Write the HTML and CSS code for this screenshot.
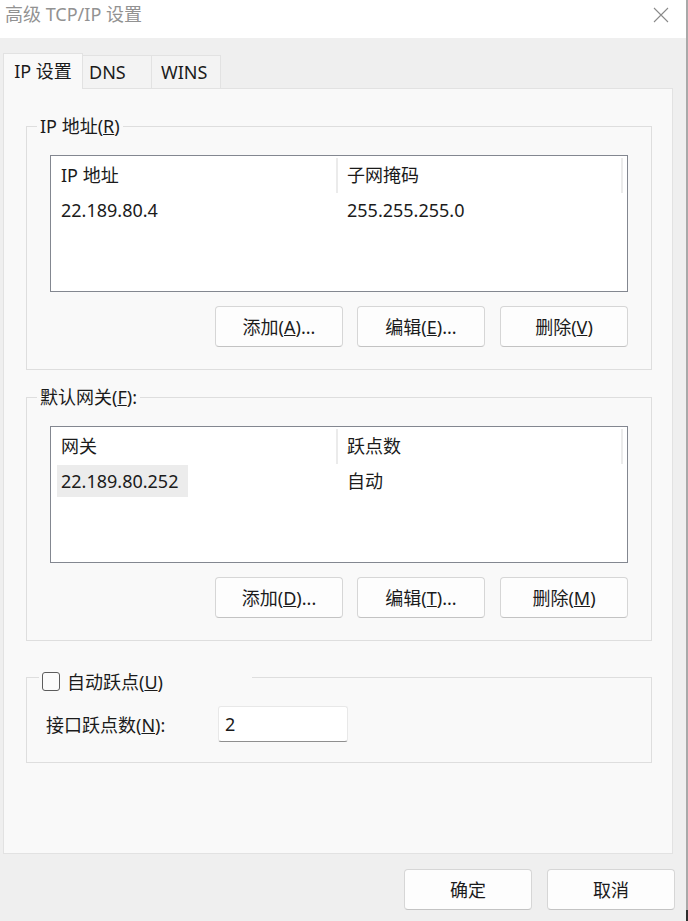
FILE: index.html
```html
<!DOCTYPE html>
<html lang="zh-CN">
<head>
<meta charset="utf-8">
<title>高级 TCP/IP 设置</title>
<link rel="stylesheet" href="styles.css">
</head>
<body>
<div class="screen">
  <div class="dialog">
    <div class="titlebar">
      <span class="title">高级 TCP/IP 设置</span>
      <svg class="close" width="16" height="16" viewBox="0 0 16 16"><path d="M1 1 L15 15 M15 1 L1 15" stroke="#8a8a8a" stroke-width="1.1" fill="none"/></svg>
    </div>
    <div class="dialog-body">
      <div class="tabs">
        <div class="tab active">IP 设置</div>
        <div class="tab dns">DNS</div>
        <div class="tab wins">WINS</div>
      </div>
      <div class="panel">
        <fieldset class="group">
          <legend>IP 地址(<u>R</u>)</legend>
          <div class="group-content">
            <div class="listview">
              <div class="lv-header">
                <div class="lv-col c1">IP 地址</div>
                <div class="lv-col c2">子网掩码</div>
              </div>
              <div class="lv-row">
                <div class="lv-cell c1"><span class="cell-text">22.189.80.4</span></div>
                <div class="lv-cell c2">255.255.255.0</div>
              </div>
            </div>
            <div class="btn-row">
              <button class="btn">添加(<u>A</u>)...</button>
              <button class="btn">编辑(<u>E</u>)...</button>
              <button class="btn">删除(<u>V</u>)</button>
            </div>
          </div>
        </fieldset>
        <fieldset class="group second">
          <legend>默认网关(<u>F</u>):</legend>
          <div class="group-content">
            <div class="listview">
              <div class="lv-header">
                <div class="lv-col c1">网关</div>
                <div class="lv-col c2">跃点数</div>
              </div>
              <div class="lv-row">
                <div class="lv-cell c1"><span class="cell-text selected">22.189.80.252</span></div>
                <div class="lv-cell c2">自动</div>
              </div>
            </div>
            <div class="btn-row">
              <button class="btn">添加(<u>D</u>)...</button>
              <button class="btn">编辑(<u>T</u>)...</button>
              <button class="btn">删除(<u>M</u>)</button>
            </div>
          </div>
        </fieldset>
        <fieldset class="group metric">
          <legend>
            <span class="checkbox"></span>
            <span class="check-label">自动跃点(<u>U</u>)</span>
          </legend>
          <div class="group-content metric-content">
            <span class="field-label">接口跃点数(<u>N</u>):</span>
            <div class="textbox">2</div>
          </div>
        </fieldset>
      </div>
      <div class="footer">
        <button class="btn">确定</button>
        <button class="btn">取消</button>
      </div>
    </div>
  </div>
  <div class="desktop-edge"></div>
</div>
</body>
</html>
```

FILE: styles.css
```css
* { box-sizing: border-box; }

html, body {
  margin: 0;
  padding: 0;
}

body {
  width: 688px;
  height: 921px;
  overflow: hidden;
  font-family: "Noto Sans", "Noto Sans CJK SC", sans-serif;
  font-size: 18px;
  color: #1b1b1b;
  background: #a6a6a6;
}

.screen {
  display: flex;
  height: 921px;
}

.dialog {
  width: 686px;
  height: 921px;
  display: flex;
  flex-direction: column;
  background: #efefef;
}

.desktop-edge {
  flex: 1;
  background: linear-gradient(to bottom, #a9a9a9 0, #a9a9a9 910px, #2e2e2e 910px);
}

.titlebar {
  height: 38px;
  background: #ffffff;
  display: flex;
  justify-content: space-between;
  align-items: flex-start;
  padding-left: 5px;
  padding-right: 17px;
}

.title {
  line-height: 28px;
  color: #929292;
  font-size: 18px;
}

.close {
  margin-top: 7px;
}

.dialog-body {
  flex: 1;
  padding: 15px 11px 0 3px;
  display: flex;
  flex-direction: column;
}

.tabs {
  display: flex;
  align-items: flex-end;
  height: 35px;
}

.tab {
  height: 33px;
  line-height: 32px;
  background: #f3f3f3;
  border: 1px solid #e2e2e2;
  border-bottom: none;
  width: 69px;
}

.tab.active {
  width: 80px;
  height: 36px;
  line-height: 34px;
  text-align: center;
  background: #f9f9f9;
  margin-bottom: -1px;
  position: relative;
  z-index: 1;
}

.tab.dns {
  padding-left: 6px;
  border-left: none;
}

.tab.wins {
  padding-left: 9px;
  border-left: none;
}

.panel {
  width: 670px;
  height: 766px;
  background: #f9f9f9;
  border: 1px solid #e2e2e2;
  padding: 27px 20px 0 22px;
}

.group {
  margin: 0;
  padding: 0;
  border: 1px solid #dedede;
  min-width: 0;
}

.group legend {
  margin-left: 10px;
  padding: 0 3px;
  line-height: 20px;
  height: 20px;
}

.group.second {
  margin-top: 17px;
}

.group-content {
  padding: 19px 23px 22px 23px;
}

.listview {
  height: 137px;
  background: #ffffff;
  border: 1px solid #838790;
}

.lv-header {
  display: flex;
  height: 38px;
  padding-top: 2px;
}

.lv-col {
  height: 35px;
  line-height: 35px;
  border-right: 2px solid #ebebeb;
}

.c1 {
  width: 287px;
  padding-left: 10px;
}

.c2 {
  width: 285px;
  padding-left: 9px;
}

.lv-row {
  display: flex;
  height: 32px;
  line-height: 32px;
}

.lv-cell.c1 {
  padding-left: 6px;
}

.cell-text {
  display: inline-block;
  padding: 0 5px 0 4px;
}

.cell-text.selected {
  background: #ececec;
  padding-right: 10px;
}

.btn-row {
  display: flex;
  justify-content: flex-end;
  gap: 14px;
  margin-top: 14px;
}

.btn {
  width: 128px;
  height: 41px;
  font-family: inherit;
  font-size: 18px;
  color: #1b1b1b;
  background: #fdfdfd;
  border: 1px solid #d6d6d6;
  border-bottom-color: #c3c3c3;
  border-radius: 4px;
  padding: 0;
  line-height: 38px;
}

.btn-row .btn + .btn + .btn {
  margin-left: 1px;
}

.group.metric {
  margin-top: 31px;
}

.group.metric legend {
  margin-left: 12px;
  height: 10px;
  width: 213px;
  display: flex;
  align-items: flex-start;
  gap: 7px;
}

.checkbox {
  width: 18px;
  height: 19px;
  border: 1px solid #5c5c5c;
  border-radius: 3px;
  background: #fbfbfb;
  flex: none;
}

.check-label {
  line-height: 20px;
}

.metric-content {
  display: flex;
  align-items: center;
  padding: 24px 19px 20px 19px;
}

.field-label {
  width: 172px;
}

.textbox {
  width: 130px;
  height: 36px;
  line-height: 34px;
  padding-left: 6px;
  background: #ffffff;
  border: 1px solid #e8e8e8;
  border-bottom-color: #8f8f8f;
  border-radius: 3px;
}

.footer {
  display: flex;
  justify-content: flex-end;
  gap: 15px;
  margin-top: 15px;
}
```
